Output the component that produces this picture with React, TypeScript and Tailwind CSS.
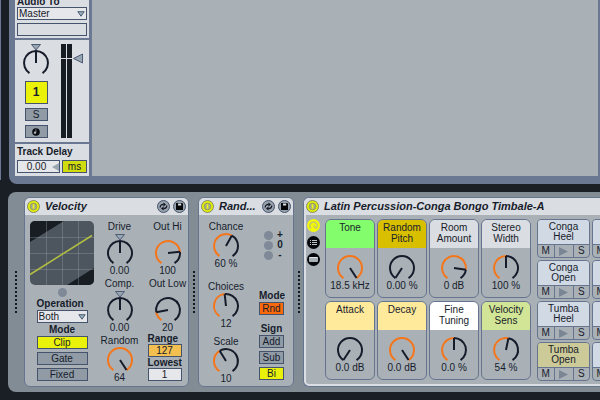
import { useState } from "react";
import type { ReactNode } from "react";

const SWEEP = 147;
const RADIUS = 12;

const fixed = (digits: number, unit = "") => (value: number) =>
  `${value.toFixed(digits)}${unit}`;

const macros = [
  { id: "tone", name: "Tone", color: "bg-[#83fd6b]", min: 0, max: 18.5, value: 18.5, format: fixed(1, " kHz") },
  { id: "pitch", name: "Random Pitch", color: "bg-[#d8bf00]", min: 0, max: 100, value: 0, format: fixed(2, " %") },
  { id: "room", name: "Room Amount", color: "bg-[#dadde2]", min: -60, max: 12, value: 0, format: fixed(0, " dB") },
  { id: "width", name: "Stereo Width", color: "bg-[#dadde2]", min: 0, max: 200, value: 100, format: fixed(0, " %") },
  { id: "attack", name: "Attack", color: "bg-[#ffea9b]", min: 0, max: 10, value: 0, format: fixed(1, " dB") },
  { id: "decay", name: "Decay", color: "bg-[#ffea9b]", min: -10, max: 0, value: 0, format: fixed(1, " dB") },
  { id: "fine", name: "Fine Tuning", color: "bg-white", min: -50, max: 50, value: 0, format: fixed(1, " %") },
  { id: "sens", name: "Velocity Sens", color: "bg-[#d2e596]", min: 0, max: 100, value: 54, format: fixed(0, " %") },
];

const pads = [
  { id: "1", name: "Conga Heel", color: "bg-[#d0d9e4]" },
  { id: "2", name: "", color: "bg-[#d0d9e4]" },
  { id: "3", name: "Conga Open", color: "bg-[#d0d9e4]" },
  { id: "4", name: "", color: "bg-[#d0d9e4]" },
  { id: "5", name: "Tumba Heel", color: "bg-[#d0d9e4]" },
  { id: "6", name: "", color: "bg-[#d0d9e4]" },
  { id: "7", name: "Tumba Open", color: "bg-[#cbca98]" },
  { id: "8", name: "", color: "bg-[#d0d9e4]" },
];

const point = (angle: number, cy: number) => {
  const rad = (angle * Math.PI) / 180;
  return `${(14 + RADIUS * Math.sin(rad)).toFixed(2)} ${(cy - RADIUS * Math.cos(rad)).toFixed(2)}`;
};

const arc = (from: number, to: number, cy: number) =>
  to - from < 1
    ? ""
    : `M${point(from, cy)}A${RADIUS} ${RADIUS} 0 ${to - from > 180 ? 1 : 0} 1 ${point(to, cy)}`;

type KnobProps = {
  label: string;
  min: number;
  max: number;
  value: number;
  format?: (value: number) => string;
  bipolar?: boolean;
  tall?: boolean;
  hideLabel?: boolean;
};

const Knob = ({ label, min, max, value, format, bipolar, tall = bipolar, hideLabel }: KnobProps) => {
  const [current, setCurrent] = useState(value);
  const angle = -SWEEP + (2 * SWEEP * (current - min)) / (max - min);
  const cy = tall ? 20 : 13;
  const from = bipolar ? Math.min(0, angle) : -SWEEP;
  const to = bipolar ? Math.max(0, angle) : angle;

  return (
    <label className="relative flex flex-col items-center whitespace-nowrap leading-[13px]">
      {!hideLabel && <span>{label}</span>}
      <svg width="28" height={tall ? 31 : 24} className="overflow-visible" fill="none">
        <path d={arc(-SWEEP, from, cy) + arc(to, SWEEP, cy)} stroke="#171c2b" strokeWidth="2" />
        <path d={arc(from, to, cy)} stroke="#f5761a" strokeWidth="2" />
        <path d={`M14 ${cy}L${point(angle, cy)}`} stroke="#171c2b" strokeWidth="2" />
        {bipolar && <path d="M9.5 1.5h9L14 7z" fill="#98a5b3" stroke="#4d5b74" />}
      </svg>
      {format && <span>{format(current)}</span>}
      <input
        type="range"
        aria-label={label}
        min={min}
        max={max}
        step="any"
        value={current}
        onChange={(e) => setCurrent(Number(e.target.value))}
        className="absolute inset-0 size-full cursor-pointer opacity-0"
      />
    </label>
  );
};

const Toggle = ({
  children,
  on = "bg-[#eaf20a]",
  active = false,
  className = "h-[13px]",
  label,
}: {
  children: ReactNode;
  on?: string;
  active?: boolean;
  className?: string;
  label?: string;
}) => {
  const [pressed, setPressed] = useState(active);

  return (
    <button
      type="button"
      aria-label={label}
      aria-pressed={pressed}
      onClick={() => setPressed(!pressed)}
      className={`flex items-center justify-center border border-[#46536c] leading-[11px] ${
        pressed ? on : "bg-[#909ba6]"
      } ${className}`}
    >
      {children}
    </button>
  );
};

const Dropdown = ({ label, options }: { label: string; options: string[] }) => (
  <div className="relative">
    <select
      aria-label={label}
      className="block h-[13px] w-full appearance-none border border-[#46536c] bg-[#e6e7ea] pl-px leading-[11px]"
    >
      {options.map((option) => (
        <option key={option}>{option}</option>
      ))}
    </select>
    <svg width="8" height="6" className="pointer-events-none absolute top-1 right-[2px]">
      <path d="M.8.7h6.4L4 5.2z" fill="#98b0bc" stroke="#4d5b74" />
    </svg>
  </div>
);

const PowerIcon = () => (
  <svg width="13" height="13" viewBox="0 0 13 13" fill="none">
    <circle cx="6.5" cy="6.5" r="6" fill="#e4ee0c" stroke="#6d7760" strokeWidth=".8" />
    <circle cx="6.5" cy="6.5" r="3.4" fill="#a3a98c" stroke="#8a9244" strokeWidth=".6" />
    <path d="M6.5 4.2v4.6" stroke="#f2fa10" strokeWidth="1.6" />
  </svg>
);

const SwapIcon = () => (
  <svg width="13" height="13" viewBox="0 0 13 13" fill="none">
    <circle cx="6.5" cy="6.5" r="6" fill="#98a2ad" stroke="#46536c" />
    <path d="M3.2 7.4C3.2 5.4 4.4 4.4 6.6 4.4M9.8 5.6C9.8 7.6 8.6 8.6 6.4 8.6" stroke="#10141c" strokeWidth="1.2" />
    <path d="M6.4 2.4v4L9 4.4zM6.6 10.6v-4L4 8.6z" fill="#10141c" />
  </svg>
);

const SaveIcon = () => (
  <svg width="13" height="13" viewBox="0 0 13 13">
    <circle cx="6.5" cy="6.5" r="6" fill="#98a2ad" stroke="#46536c" />
    <path d="M3 3h6.2L10 3.8V10H3z" fill="#05070a" />
    <path d="M5 3.5h3.2v2H5z" fill="#dadde2" />
  </svg>
);

const DeviceHeader = ({ title, actions = true }: { title: string; actions?: boolean }) => (
  <header className="flex h-[17px] items-center gap-[3px] bg-[#dadde2] px-[2px]">
    <button type="button" aria-label={`${title} on`}>
      <PowerIcon />
    </button>
    <h2 className="flex-1 pl-[2px] text-[11px] leading-[13px] font-bold whitespace-nowrap italic">{title}</h2>
    {actions && (
      <>
        <button type="button" aria-label={`Swap ${title}`}>
          <SwapIcon />
        </button>
        <button type="button" aria-label={`Save ${title}`}>
          <SaveIcon />
        </button>
      </>
    )}
  </header>
);

const Handle = ({ className = "w-[9px]" }: { className?: string }) => (
  <div className={`flex shrink-0 flex-col items-center justify-center gap-[2px] ${className}`}>
    {Array.from({ length: 11 }, (_, i) => (
      <span key={i} className="size-[2px] bg-[#14181f]" />
    ))}
  </div>
);

const NumberBox = ({ label, value, color }: { label: string; value: string; color: string }) => (
  <label className="flex flex-col leading-[10px] font-bold">
    {label}
    <input
      defaultValue={value}
      className={`h-[13px] w-[34px] border border-[#46536c] text-center leading-[11px] font-normal ${color}`}
    />
  </label>
);

const TrackStrip = () => (
  <aside className="flex w-[74px] shrink-0 flex-col justify-end gap-[2px]">
    <section className="flex min-h-0 flex-1 flex-col justify-end gap-[3px] overflow-hidden bg-[#dadde2] px-[2px] pb-[2px]">
      <div>
        <h3 className="leading-[11px] font-bold">Audio To</h3>
        <Dropdown label="Audio To" options={["Master", "Sends Only"]} />
      </div>
      <div className="h-[13px] shrink-0 border border-[#46536c]" />
    </section>
    <section className="flex h-[102px] shrink-0 gap-3 bg-[#dadde2] pt-[3px] pl-[7px]">
      <div className="flex flex-col items-center gap-1">
        <Knob label="Pan" min={-50} max={50} value={0} bipolar hideLabel />
        <div className="flex w-[23px] flex-col gap-1 pt-[3px]">
          <Toggle active className="h-[23px] text-xs font-bold">
            1
          </Toggle>
          <Toggle>S</Toggle>
          <Toggle label="Arm">
            <svg width="8" height="8" viewBox="0 0 8 8">
              <circle cx="4" cy="4" r="3.8" fill="#080b10" />
              <path d="M4.3 1.2v3.6a1.3 1.1 0 1 1-.7-1V1.2z" fill="#aab3bb" />
            </svg>
          </Toggle>
        </div>
      </div>
      <svg width="24" height="96" className="-ml-px">
        <path d="M0 1h5v94H0zM6 1h5v94H6z" fill="#171c22" />
        <path d="M0 15.5h12" stroke="#dadde2" />
        <path d="M21.5 11v9l-9-4.5z" fill="#98a5b3" stroke="#4d5b74" />
      </svg>
    </section>
    <section className="flex h-8 shrink-0 flex-col gap-[2px] bg-[#dadde2] px-[2px] pt-[2px]">
      <h3 className="leading-3 font-bold">Track Delay</h3>
      <div className="flex gap-[2px]">
        <div className="relative flex-1">
          <input
            aria-label="Track Delay"
            defaultValue="0.00"
            className="block h-[13px] w-full border border-[#46536c] bg-[#e6e7ea] pr-1 text-center leading-[11px]"
          />
          <svg width="7" height="8" className="pointer-events-none absolute top-[3px] right-px">
            <path d="M7 0v8L0 4z" fill="#98a5b3" />
          </svg>
        </div>
        <Toggle active on="bg-[#d0dc0e]" className="h-[13px] w-[25px]">
          ms
        </Toggle>
      </div>
    </section>
  </aside>
);

const VelocityDevice = () => (
  <section className="flex w-[165px] shrink-0 flex-col overflow-hidden rounded-md border border-[#66748f] bg-[#a9b1b7]">
    <DeviceHeader title="Velocity" />
    <div className="flex flex-1 pt-[5px] pl-[5px]">
      <div className="flex w-16 flex-col items-center">
        <svg width="64" height="64" viewBox="0 0 64 64" className="mt-px rounded-[5px]">
          <path d="M0 0h64v64H0z" fill="#4d565f" />
          <path d="M0 0h34L0 21zM64 64H37L64 47z" fill="#181d24" />
          <path
            d="M16.5 0v64M32.5 0v64M48.5 0v64M0 16.5h64M0 32.5h64M0 48.5h64"
            stroke="#9aa3ab"
            strokeOpacity=".35"
          />
          <path d="M0 53.5L62 14.5" stroke="#b3bf40" strokeWidth="1.5" />
        </svg>
        <span className="mt-[3px] size-[9px] rounded-full bg-[#7f8997]" />
        <div className="flex w-[51px] flex-col pt-px">
          <h3 className="leading-3 font-bold">Operation</h3>
          <Dropdown label="Operation" options={["Both", "Velocity", "Rel. Vel."]} />
          <h3 className="pt-px text-center leading-3 font-bold">Mode</h3>
          <div className="flex flex-col gap-[3px]">
            <Toggle active>Clip</Toggle>
            <Toggle>Gate</Toggle>
            <Toggle>Fixed</Toggle>
          </div>
        </div>
      </div>
      <div className="flex w-[51px] flex-col">
        <Knob label="Drive" min={-1} max={1} value={0} format={fixed(2)} bipolar />
        <Knob label="Comp." min={-1} max={1} value={0} format={fixed(2)} bipolar />
        <Knob label="Random" min={0} max={64} value={64} format={fixed(0)} />
      </div>
      <div className="flex flex-1 flex-col items-center pl-[2px]">
        <Knob label="Out Hi" min={0} max={127} value={100} format={fixed(0)} tall />
        <Knob label="Out Low" min={0} max={127} value={20} format={fixed(0)} tall />
        <div className="flex w-10 flex-col gap-px">
          <NumberBox label="Range" value="127" color="bg-[#f3bf50]" />
          <NumberBox label="Lowest" value="1" color="bg-[#e6e7ea]" />
        </div>
      </div>
    </div>
  </section>
);

const RandomDevice = () => (
  <section className="flex w-24 shrink-0 flex-col overflow-hidden rounded-md border border-[#66748f] bg-[#a9b1b7]">
    <DeviceHeader title="Rand..." />
    <div className="flex flex-1 justify-between pt-[5px] pr-[9px] pl-[8px]">
      <div className="flex w-[38px] flex-col">
        <Knob label="Chance" min={0} max={100} value={60} format={fixed(0, " %")} />
        <div className="pt-[10px] pb-[5px]">
          <Knob label="Choices" min={1} max={24} value={12} format={fixed(0)} />
        </div>
        <Knob label="Scale" min={1} max={24} value={10} format={fixed(0)} />
      </div>
      <div className="flex w-[25px] flex-col pt-[10px]">
        <ul className="flex flex-col font-bold">
          {["+", "0", "-"].map((sign) => (
            <li key={sign} className="flex h-[10px] items-center gap-1 pl-[5px] leading-[10px]">
              <span className="size-[9px] shrink-0 rounded-full bg-[#7f8997]" />
              <span className="w-[6px] text-center">{sign}</span>
            </li>
          ))}
        </ul>
        <h3 className="pt-[29px] text-center leading-[13px] font-bold">Mode</h3>
        <Toggle active on="bg-[#f8690c]">
          Rnd
        </Toggle>
        <h3 className="pt-[7px] text-center leading-[13px] font-bold">Sign</h3>
        <div className="flex flex-col gap-[3px]">
          <Toggle>Add</Toggle>
          <Toggle>Sub</Toggle>
          <Toggle active>Bi</Toggle>
        </div>
      </div>
    </div>
  </section>
);

const RackViews = () => (
  <nav className="flex w-[19px] shrink-0 flex-col gap-1 pl-px">
    <button type="button" aria-label="Macro controls">
      <svg width="13" height="13" viewBox="0 0 13 13" fill="none">
        <circle cx="6.5" cy="6.5" r="6.5" fill="#f2f806" />
        <path d="M4 9.4A3.7 3.7 0 1 1 9 9.4M6.5 6.5L8.8 9.2" stroke="#b3b98c" strokeWidth="1.1" />
      </svg>
    </button>
    <button type="button" aria-label="Chain list">
      <svg width="13" height="13" viewBox="0 0 13 13">
        <circle cx="6.5" cy="6.5" r="6.5" fill="#05070a" />
        <path d="M3 4.5h1M5 4.5h5M3 6.5h1M5 6.5h5M3 8.5h1M5 8.5h5" stroke="#b9c0c6" />
      </svg>
    </button>
    <button type="button" aria-label="Devices">
      <svg width="13" height="13" viewBox="0 0 13 13">
        <circle cx="6.5" cy="6.5" r="6.5" fill="#05070a" />
        <rect x="2" y="4" width="9" height="5" rx="1" fill="#a9b1b7" />
        <path d="M2.5 4.5h8" stroke="#e2e5e8" />
      </svg>
    </button>
  </nav>
);

const RackDevice = () => (
  <section className="flex min-w-0 flex-1 flex-col overflow-hidden rounded-l-md border border-r-0 border-[#66748f] bg-[#dadde2]">
    <DeviceHeader title="Latin Percussion-Conga Bongo Timbale-A" actions={false} />
    <div className="mb-[2px] ml-[2px] flex flex-1 rounded-bl-[3px] bg-[#a9b1b7] pt-1">
      <RackViews />
      <div className="grid shrink-0 grid-cols-[repeat(4,50px)] content-start gap-x-[2px] gap-y-[3px]">
        {macros.map((macro) => (
          <div
            key={macro.id}
            className="h-[79px] overflow-hidden rounded-md border border-[#66748f] text-center leading-[11px]"
          >
            <div className={`h-7 px-1 pt-[2px] ${macro.color}`}>{macro.name}</div>
            <div className="pt-[7px]">
              <Knob
                label={macro.name}
                min={macro.min}
                max={macro.max}
                value={macro.value}
                format={macro.format}
                hideLabel
              />
            </div>
          </div>
        ))}
      </div>
      <div className="ml-[6px] grid shrink-0 grid-cols-[repeat(2,53px)] content-start gap-[2px]">
        {pads.map((pad) => (
          <div
            key={pad.id}
            className="flex h-[39px] flex-col overflow-hidden rounded-[4px] border border-[#66748f] text-center"
          >
            <div className={`h-6 px-2 pt-[2px] leading-[10px] ${pad.color}`}>{pad.name}</div>
            <div className="flex flex-1 divide-x divide-[#66748f] border-t border-[#66748f]">
              <button type="button" className="flex-1 leading-3">
                M
              </button>
              <button type="button" aria-label="Preview" className="flex w-[19px] items-center justify-center">
                <svg width="9" height="9">
                  <path d="M0 0v9l9-4.5z" fill="#7b8694" />
                </svg>
              </button>
              <button type="button" className="flex-1 leading-3">
                S
              </button>
            </div>
          </div>
        ))}
      </div>
    </div>
  </section>
);

const App = () => {
  return (
    <div className="flex h-screen flex-col gap-2 overflow-hidden bg-[#1a1f26] pb-2 font-['Liberation_Sans',Arial,sans-serif] text-[10px] text-[#171c2b]">
      <div className="flex min-h-0 flex-1 gap-2">
        <div className="mb-1 w-px bg-[#6b7892]" />
        <main className="flex flex-1 gap-[3px] overflow-hidden rounded-bl-lg bg-[#6b7892] pr-[2px] pb-2 pl-[6px]">
          <TrackStrip />
          <div className="flex-1 bg-[#a9b1b7]" />
        </main>
      </div>
      <footer className="ml-2 flex h-[200px] shrink-0 overflow-hidden rounded-l-lg bg-[#828c95] py-[5px]">
        <Handle className="w-4" />
        <VelocityDevice />
        <Handle />
        <RandomDevice />
        <Handle />
        <RackDevice />
      </footer>
    </div>
  );
};

export default App;
